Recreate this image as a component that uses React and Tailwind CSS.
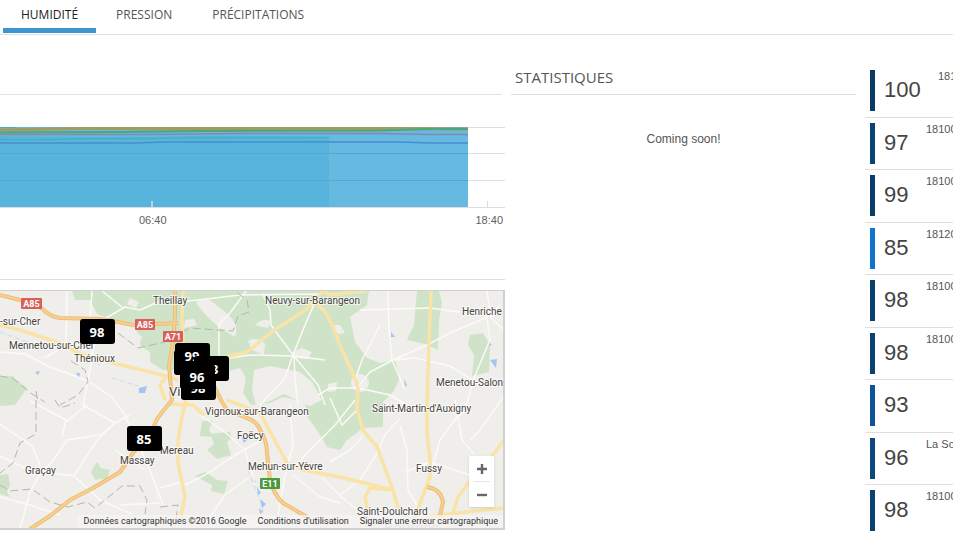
import React from "react";

const tabs = ["HUMIDITÉ", "PRESSION", "PRÉCIPITATIONS"];

const stations = [
  { value: "100", bar: "bg-[#0b3a66]", name: "1810", far: true },
  { value: "97", bar: "bg-[#0c4377]", name: "18100" },
  { value: "99", bar: "bg-[#0a3c6c]", name: "18100" },
  { value: "85", bar: "bg-[#1173d0]", name: "18120" },
  { value: "98", bar: "bg-[#0a4070]", name: "18100" },
  { value: "98", bar: "bg-[#0b4170]", name: "18100" },
  { value: "93", bar: "bg-[#0f549a]", name: "" },
  { value: "96", bar: "bg-[#0d4780]", name: "La Sou" },
  { value: "98", bar: "bg-[#0b4170]", name: "18100" },
];

const towns = [
  [0, 325, "-sur-Cher"],
  [153, 304, "Theillay"],
  [265, 304, "Neuvy-sur-Barangeon"],
  [462, 315, "Henriche"],
  [9, 349, "Mennetou-sur-Cher"],
  [74, 362, "Thénioux"],
  [436, 386, "Menetou-Salon"],
  [205, 415, "Vignoux-sur-Barangeon"],
  [372, 412, "Saint-Martin-d'Auxigny"],
  [237, 439, "Foëcy"],
  [160, 454, "Mereau"],
  [120, 464, "Massay"],
  [25, 474, "Graçay"],
  [248, 470, "Mehun-sur-Yèvre"],
  [416, 472, "Fussy"],
  [357, 515, "Saint-Doulchard"],
];

const shields = [
  [21, 298, 21, "A85", "#d9605a"],
  [135, 319, 20, "A85", "#d9605a"],
  [163, 331, 20, "A71", "#d9605a"],
  [260, 478, 20, "E11", "#4c9a3c"],
];

const readings = [
  [80, 319, "98"],
  [127, 426, "85"],
  [181, 375, "98"],
  [174, 350, ""],
  [175, 343, "99"],
  [194, 356, "93"],
  [180, 364, "96"],
];

const yellowRoads = [
  "M0 325 L20 330 L57 342 L83 355 L113 363 L150 372 L170 377",
  "M183 291 L182 325 L184 350",
  "M215 362 L227 357 L247 352 L273 331 L307 309 L316 300 L323 290",
  "M323 291 Q330 297 345 293 L367 291",
  "M316 302 L326 313 L333 327 L341 348 L355 378 L358 388 L357 410 L363 430 L377 447 L393 490 L400 515",
  "M431 291 L429 342 L427 405 L427 433 L430 460 L430 477 L420 503 L415 518",
  "M504 440 L493 455 L473 477 L458 497 L453 513",
  "M425 517 L440 515 L504 508",
  "M227 400 L240 405 L260 413 L273 437 L287 463 L303 470 L340 477 L393 490",
  "M393 490 L370 488 L365 497 L368 512",
  "M187 395 L183 412 L178 440 L178 463 L185 497 L180 520",
  "M168 404 L193 405 L204 415",
  "M178 380 L167 376 L160 385 L165 400",
];

const motorways = [
  "M0 295 L20 300 L40 307 Q50 317 60 318 L100 319 L113 321 L133 325 L178 323",
  "M175 291 L175 315 L173 342 L169 365 L172 400 Q166 407 157 419 L150 435 L133 453 L120 472 L93 488 L70 500 L50 516 L30 529",
  "M210 375 L215 388 L222 402 L227 410 L247 418 Q258 422 260 430 Q267 440 267 453 L270 480 Q274 495 283 503 L307 517",
  "M427 487 Q441 489 443 502 L440 516",
];

const whiteRoads = [
  "M0 352 L25 354 L50 367 L88 381 L112 397 L125 415 L150 470 L163 505",
  "M67 291 L66 345 L55 352 L44 358",
  "M92 291 L90 320 L94 345 L88 381",
  "M88 381 L83 405 L115 423 L100 435 L67 440 L52 462 L40 474 L30 492 L20 529",
  "M0 424 L32 446 L42 470",
  "M30 401 L66 420 L62 437 M87 405 L66 422",
  "M0 456 L25 468 M42 472 L74 476 L100 500 L132 514",
  "M74 476 L97 440 L115 423 L130 415",
  "M106 318 L125 307 L140 310 L158 302",
  "M102 291 L122 307",
  "M180 302 L215 298 L240 295 L320 294",
  "M246 291 L230 313 L219 324 L219 360",
  "M263 295 L270 310 L271 325 L293 355 L318 385 L325 405",
  "M316 300 L305 325 L293 355 L285 378 L260 405",
  "M215 360 L250 355 L293 356 L325 360",
  "M294 356 L295 380 L298 405",
  "M388 291 L389 330 L392 360 L405 390",
  "M358 387 L370 372 L393 360 L427 345 L450 333 L488 317 L500 305",
  "M358 388 L390 395 L415 410",
  "M358 388 L330 388 L318 395",
  "M392 360 L415 358 L450 366 L480 385",
  "M360 310 L430 308 L460 312",
  "M487 318 L490 340 L474 378 L465 410 L455 420",
  "M487 291 L491 318 L504 330",
  "M458 415 L440 440 L430 475",
  "M400 418 L385 435 L376 455 L360 480 L340 495",
  "M400 425 L407 450 L408 490 L417 505",
  "M455 400 L462 440 L475 455",
  "M330 462 L350 450 L363 436",
  "M322 478 L345 500 L365 515",
  "M505 395 L480 430 L470 440",
  "M200 415 L225 432 L245 450 L255 485",
  "M185 485 L205 475 L235 455 L262 440",
  "M183 482 L160 488",
  "M248 478 L225 495 L208 520",
  "M290 405 L293 445 L285 475 L278 515",
  "M293 475 L320 497 L340 503",
  "M293 470 L305 455 L335 425 L355 400",
  "M330 398 L342 425 L357 410",
  "M355 380 L362 360 L370 345 L380 325",
  "M0 497 L30 505 L60 515",
  "M115 450 L145 470 M120 505 L160 503",
  "M405 472 L430 462 L470 475",
];

function RegionMap() {
  return (
    <div className="relative h-[240px] overflow-hidden border-t border-r-2 border-b-2 border-[#d0d0d0] bg-[#f0eeea]">
      <svg className="block h-full w-full" viewBox="0 291 503 237" preserveAspectRatio="xMinYMin slice">
        <rect y="291" width="2000" height="600" fill="#f0eeea" />
        <g fill="#cfe3c9">
          <path d="M72 291 L75 300 L90 300 L97 314 L113 320 L135 323 L140 345 L150 352 L150 362 L163 370 L174 370 L185 378 L213 377 L225 372 L240 368 L246 378 L243 393 L251 405 L270 403 L283 397 L305 402 L308 418 L317 430 L327 447 L340 450 L347 440 L363 428 L383 427 L383 402 L393 392 L400 378 L395 360 L380 363 L367 358 L355 342 L350 317 L367 305 L369 291 Z" />
          <path d="M417 291 L439 291 L442 303 L439 320 L438 350 L425 344 L407 340 L414 325 Z" />
          <path d="M470 335 L483 333 L490 345 L489 372 L472 376 L474 355 L468 345 Z" />
          <path d="M0 377 L12 376 L27 388 L15 405 L0 406 Z" />
          <path d="M97 462 L101 468 L110 470 L107 478 L95 480 L91 472 Z" />
          <path d="M0 475 L8 474 L10 485 L7 492 L10 497 L0 494 Z" />
          <path d="M202 421 L213 421 L209 430 L213 437 L200 436 Z" />
          <path d="M210 434 L230 432 L232 438 L227 442 L231 455 L217 459 L207 450 L214 444 Z" />
          <path d="M195 476 L205 472 L217 480 L228 481 L224 494 L211 491 L212 485 Z" />
        </g>
        <g fill="#f0eeea">
          <path d="M196 303 Q200 297 210 300 L225 312 Q240 323 235 337 L220 328 Q206 317 196 303 Z" />
          <path d="M254 370 L270 366 L300 372 L312 382 L322 400 L310 406 L284 394 L268 402 L256 405 L252 390 Z" />
          <path d="M255 325 Q262 318 271 321 L268 328 Z M248 341 Q257 336 265 344 L264 355 L252 350 Z" />
          <path d="M292 352 L302 348 L312 352 L308 359 L294 358 Z M332 325 L340 325 L345 333 L338 334 Z" />
          <path d="M185 320 L194 319 L197 325 L184 328 Z M130 298 L139 302 L136 308 L127 304 Z M328 384 L337 382 L336 391 L328 392 Z" />
          <circle cx="360" cy="383" r="9" />
          <path d="M133 329 L142 337 L137 350 L130 342 Z" />
        </g>
        <g fill="#a4c5f4">
          <path d="M139 388 L147 386 L145 393 L139 393 Z M35 372 L40 371 L38 375 Z M76 373 L80 373 L79 378 Z" />
          <path d="M391 332 L395 337 L391 337 Z M488 341 L492 345 L489 346 Z M490 360 L497 359 L496 368 Z M404 379 L407 385 L405 387 Z" />
          <path d="M241 436 L248 439 L244 443 Z M251 476 L256 482 L254 484 Z M257 487 L261 493 L258 495 Z M260 499 L266 504 L262 508 Z M259 508 L263 512 L260 514 Z" />
        </g>
        <path d="M0 332 L25 341 L45 350 M83 357 L100 365 M112 378 L138 386 M248 470 L260 500 L264 515" stroke="#c8d9f2" fill="none" strokeDasharray="5 3" />
        <g fill="none" stroke="#fbfaf7" strokeWidth="1.5" strokeLinejoin="round">
          {whiteRoads.map((d) => <path key={d} d={d} />)}
        </g>
        <g fill="none" stroke="#b4b5b1" strokeWidth="1" strokeDasharray="8 4">
          <path d="M0 376 L12 378 L32 394 L45 402 M71 361 L85 370 L88 382 L78 395 L60 405 M36 391 L38 403" />
          <path d="M118 333 L138 348 L165 342 L190 328 L233 331 L238 316 L249 312 L247 300 L235 291" />
          <path d="M36 400 L36 434 L20 443 L13 463 L0 473 M55 400 L60 408 L75 403" />
          <path d="M0 485 L10 491 L32 489 L50 502 L68 507 L87 502 L95 508 L122 486 L140 486 L147 500 L145 514 M160 507 L178 505 L176 520" />
        </g>
        <g fill="none" stroke="#f5e3b4" strokeWidth="3.5" strokeLinejoin="round">
          {yellowRoads.map((d) => <path key={d} d={d} />)}
        </g>
        <g fill="none" stroke="#fde3a0" strokeWidth="2" strokeLinejoin="round">
          {yellowRoads.map((d) => <path key={d} d={d} />)}
        </g>
        <g fill="none" stroke="#ecbd78" strokeWidth="4" strokeLinejoin="round">
          {motorways.map((d) => <path key={d} d={d} />)}
        </g>
        <g fill="none" stroke="#f8d08d" strokeWidth="2" strokeLinejoin="round">
          {motorways.map((d) => <path key={d} d={d} />)}
        </g>
        <g className="font-['Roboto',sans-serif] text-[10px]" fill="#45423e" stroke="#ffffff" strokeOpacity="0.7" strokeWidth="2" paintOrder="stroke">
          {towns.map(([x, y, name]) => <text key={name} x={x} y={y}>{name}</text>)}
          <text x="169" y="396" className="text-[13px]">Vi</text>
        </g>
        {shields.map(([x, y, w, label, color]) => (
          <g key={x}>
            <rect x={x} y={y} width={w} height="11" rx="1" fill={color} />
            <text x={x + w / 2} y={y + 9} textAnchor="middle" fill="#fff" className="font-['Roboto',sans-serif] text-[9px] font-bold">{label}</text>
          </g>
        ))}
        <text x="384" y="533" fill="#c4c2be" className="font-['Roboto',sans-serif] text-[15px]">Bourges</text>
        {readings.map(([x, y, label]) => (
          <g key={`${x}-${y}`}>
            <rect x={x} y={y} width="35" height="25" rx="3" fill="#000" />
            <text x={x + 17} y={y + 18} textAnchor="middle" fill="#fff" className="font-['Noto_Sans',sans-serif] text-[13px] font-bold">{label}</text>
          </g>
        ))}
      </svg>
      <div className="absolute right-[9px] bottom-[21px] flex w-[25px] flex-col items-center bg-white shadow-sm">
        <button aria-label="Zoom avant" className="flex h-[25px] w-full items-center justify-center">
          <svg width="10" height="10" viewBox="0 0 10 10"><path d="M5 0V10M0 5H10" stroke="#666" strokeWidth="2.4" /></svg>
        </button>
        <div className="h-px w-4 bg-[#e6e6e6]" />
        <button aria-label="Zoom arrière" className="flex h-[25px] w-full items-center justify-center">
          <svg width="10" height="10" viewBox="0 0 10 10"><path d="M0 5H10" stroke="#666" strokeWidth="2.4" /></svg>
        </button>
      </div>
      <div className="absolute right-0 bottom-0 flex h-[13px] items-center gap-[11px] bg-[#f5f5f5]/70 pr-[5px] pl-[6px] font-['Roboto',sans-serif] text-[9px] leading-[13px] whitespace-nowrap text-[#333]">
        <span>Données cartographiques ©2016 Google</span>
        <a href="#conditions">Conditions d'utilisation</a>
        <a href="#signaler">Signaler une erreur cartographique</a>
      </div>
    </div>
  );
}

function HumidityChart() {
  return (
    <div>
      <svg className="block h-[82px] w-full" viewBox="0 126 505 82" preserveAspectRatio="none">
        <path d="M0 127.5H505M0 153.5H505M0 180.5H505M0 207.5H505M487.5 201V207" stroke="#dedede" fill="none" />
        <rect y="127" width="468" height="80" fill="#66b9e1" />
        <path d="M0 136 L100 137 L200 136 L329 137 V207 H0Z" fill="#59b4dd" />
        <path d="M0 153.5H468M0 180.5H468" stroke="#53a8d0" fill="none" />
        <path d="M0 130 L80 128.5 L200 128.5 L400 128.5 L468 129" stroke="#a29c62" strokeWidth="3" fill="none" />
        <path d="M0 127.5H16" stroke="#4cafc0" strokeWidth="1" />
        <path d="M0 132.5 L120 132 L200 131 L380 130.5 L430 129 L468 129" stroke="#4fa676" strokeWidth="2" fill="none" />
        <path d="M0 134.5 L150 134.5 L240 133.5 L380 133.5 L430 134.5 L468 134.5" stroke="#8589ad" strokeWidth="1.5" fill="none" />
        <path d="M0 139.5 L50 139.5 L90 138.5 L150 138.5 L190 137.5 L329 137.5" stroke="#42b0bd" strokeWidth="1.5" fill="none" />
        <path d="M0 143 L135 143 L165 142 L400 142 L430 143 L468 143" stroke="#438fcd" strokeWidth="1.5" fill="none" />
        <path d="M152 201V207" stroke="#c5e6f4" strokeWidth="1.5" />
      </svg>
      <div className="flex justify-between pt-1 pr-[2px] pl-[139px] text-[11px] leading-4 text-[#606060]">
        <span>06:40</span>
        <span>18:40</span>
      </div>
    </div>
  );
}

export default function App() {
  return (
    <div className="overflow-hidden bg-white font-['Liberation_Sans',Arial,sans-serif] text-[#555]">
      <nav className="flex h-[35px] border-b border-[#dfdfdf] pl-[3px] font-['Open_Sans',sans-serif] text-[12px]">
        {tabs.map((tab, i) => (
          <button
            key={tab}
            className={
              i === 0
                ? "h-[33px] border-b-[5px] border-[#3d95cf] px-[18px] pt-[2px] text-[#222]"
                : "h-[33px] border-b-[5px] border-transparent px-5 pt-[2px] text-[#555]"
            }
          >
            {tab}
          </button>
        ))}
      </nav>
      <main className="grid grid-cols-[minmax(0,505fr)_minmax(0,345fr)_minmax(0,91fr)] gap-x-[6px]">
        <div>
          <div className="mr-[3px] h-[60px] border-b border-[#e2e2e2]" />
          <div className="pt-[31px]">
            <HumidityChart />
          </div>
          <div className="h-[52px] border-b border-[#e0e0e0]" />
          <div className="pt-[10px]">
            <RegionMap />
          </div>
        </div>
        <section>
          <h2 className="h-[60px] border-b border-[#e0e0e0] pt-[30px] pl-1 font-['Open_Sans',sans-serif] text-[15px] leading-6 text-[#555]">STATISTIQUES</h2>
          <p className="pt-[36px] text-center text-[12px] leading-4">Coming soon!</p>
        </section>
        <ul className="pt-[30px] pl-[3px]">
          {stations.map((s, i) => (
            <li key={i} className="flex items-start overflow-hidden border-b border-[#dedede] pt-[5px] pl-[5px] last:border-0 odd:h-[53px] even:h-[52px]">
              <span className={`h-[41px] w-[5px] shrink-0 ${s.bar}`} />
              <span className="w-[51px] shrink-0 pl-[9px] text-[22px] leading-10 text-[#444]">{s.value}</span>
              <span className={s.far ? "pl-3 text-[11px] leading-3 whitespace-nowrap" : "text-[11px] leading-3 whitespace-nowrap"}>{s.name}</span>
            </li>
          ))}
        </ul>
      </main>
    </div>
  );
}
